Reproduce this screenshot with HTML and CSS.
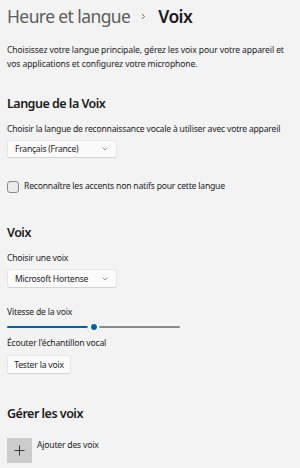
FILE: index.html
```html
<!DOCTYPE html>
<html lang="fr">
<head>
<meta charset="utf-8">
<link rel="stylesheet" href="styles.css">
</head>
<body>
<div class="page">
  <div class="title">
    <span class="crumb">Heure et langue</span>
    <svg class="sep" width="5" height="7" viewBox="0 0 5 7"><path d="M1 1 L3.5 3.5 L1 6" fill="none" stroke="#6a6a6a" stroke-width="1"/></svg>
    <span class="current">Voix</span>
  </div>
  <p class="desc">Choisissez votre langue principale, gérez les voix pour votre appareil et vos applications et configurez votre microphone.</p>

  <h2 class="heading h-first">Langue de la Voix</h2>
  <div class="label l-after-h">Choisir la langue de reconnaissance vocale à utiliser avec votre appareil</div>
  <div class="dropdown dd1">
    <span>Français (France)</span>
    <svg class="chev" width="8" height="6" viewBox="0 0 8 6"><path d="M1.5 1.5 L4 4 L6.5 1.5" fill="none" stroke="#8a8a8a" stroke-width="0.9"/></svg>
  </div>
  <label class="check-row">
    <span class="box"></span>
    <span class="check-text">Reconnaître les accents non natifs pour cette langue</span>
  </label>

  <h2 class="heading h-next">Voix</h2>
  <div class="label l-after-h">Choisir une voix</div>
  <div class="dropdown dd2">
    <span>Microsoft Hortense</span>
    <svg class="chev" width="8" height="6" viewBox="0 0 8 6"><path d="M1.5 1.5 L4 4 L6.5 1.5" fill="none" stroke="#8a8a8a" stroke-width="0.9"/></svg>
  </div>
  <div class="label l-speed">Vitesse de la voix</div>
  <div class="slider">
    <div class="track-fill"></div>
    <div class="thumb"><div class="thumb-dot"></div></div>
    <div class="track-rest"></div>
  </div>
  <div class="label l-listen">Écouter l'échantillon vocal</div>
  <button class="btn">Tester la voix</button>

  <h2 class="heading h-next">Gérer les voix</h2>
  <div class="add-row">
    <div class="add-box">
      <svg width="11" height="11" viewBox="0 0 11 11"><path d="M5.5 0.5 V10.5 M0.5 5.5 H10.5" stroke="#3a3a3a" stroke-width="1"/></svg>
    </div>
    <span class="add-text">Ajouter des voix</span>
  </div>
</div>
</body>
</html>
```

FILE: styles.css
```css
html, body {
  margin: 0;
  padding: 0;
  background: #f3f3f3;
}
body {
  font-family: "Segoe UI", "Noto Sans", "Liberation Sans", sans-serif;
  color: #1b1b1b;
  width: 300px;
  height: 468px;
  overflow: hidden;
}
.page {
  padding: 0 7px;
  display: flex;
  flex-direction: column;
  align-items: flex-start;
}
.title {
  margin-top: 4px;
  height: 24px;
  line-height: 24px;
  font-size: 17.5px;
  letter-spacing: -0.6px;
  display: flex;
  align-items: center;
  white-space: nowrap;
}
.crumb {
  color: #5d5d5d;
}
.sep {
  margin: 1px 12px 0 11px;
  display: block;
}
.current {
  font-weight: 600;
  color: #1b1b1b;
}
.desc {
  margin: 16px 0 0 0;
  font-size: 8.6px;
  letter-spacing: -0.12px;
  line-height: 13.5px;
  width: 284px;
}
.heading {
  margin: 0;
  font-size: 12.5px;
  letter-spacing: -0.5px;
  font-weight: 600;
  line-height: 19px;
  height: 19px;
}
.h-first { margin-top: 23px; }
.h-next { margin-top: 30px; }
.label {
  font-size: 8.6px;
  letter-spacing: -0.2px;
  line-height: 13px;
  height: 13px;
  white-space: nowrap;
}
.l-after-h { margin-top: 10px; }
.l-speed { margin-top: 18px; }
.l-listen { margin-top: 4px; }
.dropdown {
  margin-top: 4px;
  width: 110px;
  box-sizing: border-box;
  background: #fbfbfb;
  border: 1px solid #e6e6e6;
  border-bottom-color: #d4d4d4;
  border-radius: 3px;
  display: flex;
  align-items: center;
  justify-content: space-between;
  padding: 0 7px 0 7px;
  font-size: 8.6px;
  letter-spacing: -0.25px;
}
.dd1 { height: 18px; }
.dd2 { height: 19px; }
.chev { display: block; }
.check-row {
  margin-top: 22px;
  display: flex;
  align-items: center;
  gap: 5px;
  height: 13px;
}
.box {
  width: 12px;
  height: 12px;
  box-sizing: border-box;
  border: 1px solid #8a8a8a;
  border-radius: 3px;
  background: #ececec;
}
.check-text {
  font-size: 8.6px;
  letter-spacing: -0.2px;
  line-height: 13px;
}
.slider {
  margin-top: 2px;
  width: 173px;
  height: 12px;
  display: flex;
  align-items: center;
}
.track-fill {
  width: 81px;
  height: 2px;
  background: #005fb8;
  border-radius: 1px;
}
.thumb {
  width: 11px;
  height: 11px;
  border-radius: 50%;
  background: #ffffff;
  box-shadow: 0 0 0 0.5px #d8d8d8;
  display: flex;
  align-items: center;
  justify-content: center;
}
.thumb-dot {
  width: 6px;
  height: 6px;
  border-radius: 50%;
  background: #005fb8;
}
.track-rest {
  flex: 1;
  height: 2px;
  background: #8a8a8a;
  border-radius: 1px;
}
.btn {
  margin-top: 5px;
  height: 19px;
  box-sizing: border-box;
  padding: 0 6px;
  width: 64px;
  background: #fbfbfb;
  border: 1px solid #e6e6e6;
  border-bottom-color: #d4d4d4;
  border-radius: 3px;
  font-family: inherit;
  font-size: 8.6px;
  letter-spacing: -0.2px;
  color: #1b1b1b;
  white-space: nowrap;
}
.add-row {
  margin-top: 15px;
  display: flex;
  align-items: flex-start;
  gap: 5px;
}
.add-box {
  width: 25px;
  height: 25px;
  background: #cccccc;
  display: flex;
  align-items: center;
  justify-content: center;
}
.add-box svg { display: block; }
.add-text {
  font-size: 8.6px;
  letter-spacing: -0.2px;
  line-height: 13px;
  margin-top: 1px;
}
```
